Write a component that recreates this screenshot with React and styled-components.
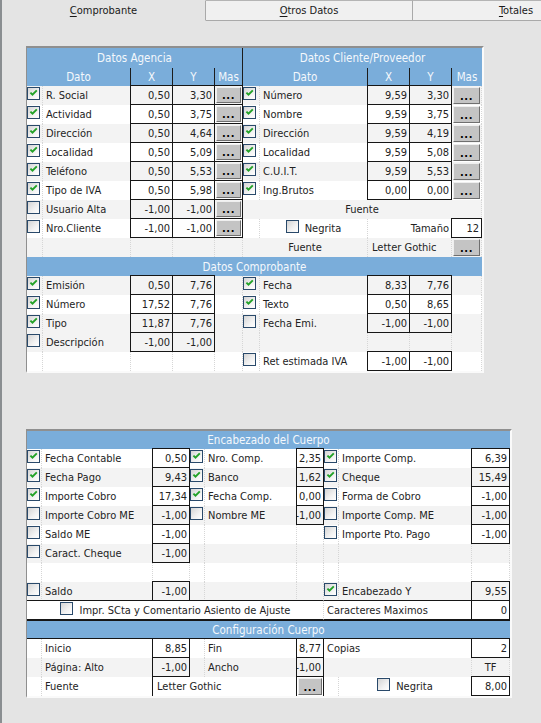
import React from "react";
import styled, { createGlobalStyle, css } from "styled-components";

const GlobalStyle = createGlobalStyle`
  html, body {
    margin: 0;
    padding: 0;
    background: #e4e4e4;
  }
  body {
    font-family: "DejaVu Sans Condensed", "DejaVu Sans", sans-serif;
    font-stretch: condensed;
    font-size: 11px;
    color: #232323;
  }
`;

const WHITE = "#ffffff";
const GREY = "#f3f3f3";

const TOP_COLS = "16px 88px 42px 42px 28px 17px 108px 42px 42px 30px";
const TOP_ROWS = "20px 18px repeat(15, 19px)";
const BOT_COLS = "15px 111px 37px 15px 92px 27px 15px 133px 38px";
const BOT_ROWS = "18px repeat(13, 19px)";

const Window = styled.div`
  width: 541px;
  height: 723px;
  box-sizing: border-box;
  border-left: 2px solid #8a8e91;
  background: #e4e4e4;
  overflow: hidden;
`;

const TabStrip = styled.div`
  display: flex;
  height: 21px;
`;

const Tab = styled.div`
  flex: 0 0 ${(p) => p.$width}px;
  box-sizing: border-box;
  display: flex;
  align-items: center;
  justify-content: center;
  color: #1a1a1a;
  background: ${(p) => (p.$active ? "#e4e4e4" : "#f0f0f0")};
  border-right: 1px solid #a9a9a9;
  border-top: 1px solid ${(p) => (p.$active ? "#e4e4e4" : "#b4b4b4")};
  border-bottom: 1px solid ${(p) => (p.$active ? "#e4e4e4" : "#a9a9a9")};

  u {
    text-decoration-thickness: 1px;
    text-underline-offset: 2px;
  }
`;

const Panel = styled.div`
  display: flex;
  flex-direction: column;
  align-items: flex-start;
  gap: 56px;
  padding: 25px 0 0 24px;
`;

const Frame = styled.div`
  border-style: solid;
  border-width: 2px 2px 2px 1px;
  border-color: #8f8f8f #fafafa #fafafa #8f8f8f;
  background: #ffffff;
`;

const Sheet = styled.div`
  display: grid;
  grid-template-columns: ${(p) => p.$cols};
  grid-template-rows: ${(p) => p.$rows};
`;

const Cell = styled.div`
  grid-column: span ${(p) => p.$span || 1};
  min-width: 0;
  box-sizing: border-box;
  display: flex;
  align-items: center;
  justify-content: ${(p) =>
    ({ right: "flex-end", center: "center" }[p.$align] || "flex-start")};
  gap: ${(p) => p.$gap || 0}px;
  padding: 0 ${(p) => (p.$align === "right" ? 2 : 0)}px 0 ${(p) => p.$pl || 0}px;
  background: ${(p) => p.$bg || WHITE};
  white-space: nowrap;
  overflow: hidden;
  border-right: 1px dotted #d6d6d6;

  ${(p) =>
    p.$box &&
    css`
      border: 1px solid #161616;
      margin: -1px 0 0 -1px;
    `}
  ${(p) =>
    p.$sides &&
    css`
      border-left: 1px solid #161616;
      border-right: 1px solid #161616;
      margin-left: -1px;
    `}
  ${(p) =>
    p.$rule &&
    css`
      border-top: 1px solid #161616;
      border-bottom: 1px solid #161616;
      margin-top: -1px;
    `}
`;

const Head = styled.div`
  grid-column: span ${(p) => p.$span || 1};
  box-sizing: border-box;
  display: flex;
  align-items: center;
  justify-content: center;
  background: #7aadda;
  color: #f4f8fc;
  font-size: 11.5px;
  white-space: nowrap;
  overflow: hidden;
  border-right: ${(p) => (p.$sep ? "1px solid #1c1c1c" : "none")};
  ${(p) =>
    p.$rule &&
    css`
      box-shadow: inset 0 -1px 0 #161616, inset 0 1px 0 #161616;
    `}
`;

const CheckBox = styled.span`
  flex: none;
  align-self: flex-start;
  width: 13px;
  height: 13px;
  margin-top: 1px;
  box-sizing: border-box;
  border: 1px solid #29496a;
  background: linear-gradient(135deg, #d4d4d4 0%, #f2f2f2 60%, #ffffff 100%);
  display: flex;
`;

const DotsButton = styled.div`
  flex: 1;
  align-self: stretch;
  margin: 1px;
  box-sizing: border-box;
  background: #c4c4c4;
  border: 1px solid;
  border-color: #efefef #6f6f6f #6f6f6f #efefef;
  display: flex;
  align-items: flex-end;
  justify-content: center;
  padding-bottom: 1px;
  color: #000;
  font-weight: bold;
  font-size: 11px;
  line-height: 11px;
  letter-spacing: 0.5px;
`;

const Check = ({ on }) => (
  <CheckBox>
    {on && (
      <svg width="11" height="11" viewBox="0 0 11 11">
        <path
          d="M2.4 4.6 L4.5 6.7 L8.8 2.3"
          fill="none"
          stroke="#22a227"
          strokeWidth="1.9"
        />
      </svg>
    )}
  </CheckBox>
);

const Dots = () => <DotsButton>...</DotsButton>;

const agencia = [
  ["R. Social", "0,50", "3,30", true],
  ["Actividad", "0,50", "3,75", true],
  ["Dirección", "0,50", "4,64", true],
  ["Localidad", "0,50", "5,09", true],
  ["Teléfono", "0,50", "5,53", true],
  ["Tipo de IVA", "0,50", "5,98", true],
  ["Usuario Alta", "-1,00", "-1,00", false],
  ["Nro.Cliente", "-1,00", "-1,00", false],
  null,
];

const cliente = [
  ["Número", "9,59", "3,30", true],
  ["Nombre", "9,59", "3,75", true],
  ["Dirección", "9,59", "4,19", true],
  ["Localidad", "9,59", "5,08", true],
  ["C.U.I.T.", "9,59", "5,53", true],
  ["Ing.Brutos", "0,00", "0,00", true],
];

const topStripes = [GREY, WHITE, GREY, WHITE, GREY, WHITE, GREY, WHITE, GREY];

const comprobante = [
  {
    bg: GREY,
    left: ["Emisión", "0,50", "7,76", true],
    right: ["Fecha", "8,33", "7,76", true],
  },
  {
    bg: WHITE,
    left: ["Número", "17,52", "7,76", true],
    right: ["Texto", "0,50", "8,65", true],
  },
  {
    bg: GREY,
    left: ["Tipo", "11,87", "7,76", true],
    right: ["Fecha Emi.", "-1,00", "-1,00", false],
  },
  { bg: GREY, left: ["Descripción", "-1,00", "-1,00", false], right: null },
  {
    bg: WHITE,
    left: null,
    right: ["Ret estimada IVA", "-1,00", "-1,00", false],
  },
];

const cuerpo = [
  {
    bg: WHITE,
    g: [
      ["Fecha Contable", "0,50", true],
      ["Nro. Comp.", "2,35", true],
      ["Importe Comp.", "6,39", true],
    ],
  },
  {
    bg: GREY,
    g: [
      ["Fecha Pago", "9,43", true],
      ["Banco", "1,62", true],
      ["Cheque", "15,49", true],
    ],
  },
  {
    bg: WHITE,
    g: [
      ["Importe Cobro", "17,34", true],
      ["Fecha Comp.", "0,00", true],
      ["Forma de Cobro", "-1,00", false],
    ],
  },
  {
    bg: GREY,
    g: [
      ["Importe Cobro ME", "-1,00", false],
      ["Nombre ME", "-1,00", false],
      ["Importe Comp. ME", "-1,00", false],
    ],
  },
  {
    bg: WHITE,
    g: [["Saldo ME", "-1,00", false], null, ["Importe Pto. Pago", "-1,00", false]],
  },
  { bg: GREY, g: [["Caract. Cheque", "-1,00", false], null, null] },
  { bg: WHITE, g: [null, null, null] },
  { bg: GREY, g: [["Saldo", "-1,00", false], null, ["Encabezado Y", "9,55", true]] },
];

const Part = ({ item, bg, button, boxMas }) => {
  if (!item) {
    return (
      <>
        <Cell $bg={bg} />
        <Cell $bg={bg} />
        <Cell $bg={bg} />
        <Cell $bg={bg} />
        <Cell $bg={bg} />
      </>
    );
  }
  const [label, x, y, on] = item;
  return (
    <>
      <Cell $bg={bg}>
        <Check on={on} />
      </Cell>
      <Cell $bg={bg} $pl={3}>
        {label}
      </Cell>
      <Cell $bg={bg} $box $align="right">
        {x}
      </Cell>
      <Cell $bg={bg} $box $align="right">
        {y}
      </Cell>
      {button ? (
        <Cell $bg={bg} $box={boxMas}>
          <Dots />
        </Cell>
      ) : (
        <Cell $bg={bg} />
      )}
    </>
  );
};

const Group = ({ item, bg }) => {
  if (!item) {
    return (
      <>
        <Cell $bg={bg} />
        <Cell $bg={bg} />
        <Cell $bg={bg} />
      </>
    );
  }
  const [label, value, on] = item;
  return (
    <>
      <Cell $bg={bg}>
        <Check on={on} />
      </Cell>
      <Cell $bg={bg} $pl={3}>
        {label}
      </Cell>
      <Cell $bg={bg} $box $align="right">
        {value}
      </Cell>
    </>
  );
};

const ClienteExtra = ({ index }) => {
  if (index === 6) {
    return (
      <Cell $span={5} $align="center" $bg={GREY}>
        Fuente
      </Cell>
    );
  }
  if (index === 7) {
    return (
      <>
        <Cell $bg={WHITE} />
        <Cell $bg={WHITE} $align="center" $gap={6}>
          <Check />
          Negrita
        </Cell>
        <Cell $span={2} $bg={WHITE} $align="right">
          Tamaño
        </Cell>
        <Cell $bg={WHITE} $box $align="right">
          12
        </Cell>
      </>
    );
  }
  return (
    <>
      <Cell $span={2} $bg={GREY} $align="center">
        Fuente
      </Cell>
      <Cell $span={2} $bg={GREY} $pl={4}>
        Letter Gothic
      </Cell>
      <Cell $bg={GREY}>
        <Dots />
      </Cell>
    </>
  );
};

const TopSheet = () => (
  <Sheet $cols={TOP_COLS} $rows={TOP_ROWS}>
    <Head $span={5} $sep>
      Datos Agencia
    </Head>
    <Head $span={5}>Datos Cliente/Proveedor</Head>

    <Head $span={2} $sep>
      Dato
    </Head>
    <Head $sep>X</Head>
    <Head $sep>Y</Head>
    <Head $sep>Mas</Head>
    <Head $span={2} $sep>
      Dato
    </Head>
    <Head $sep>X</Head>
    <Head $sep>Y</Head>
    <Head>Mas</Head>

    {agencia.map((item, i) => (
      <React.Fragment key={i}>
        <Part item={item} bg={topStripes[i]} button={!!item} boxMas />
        {i < 6 ? (
          <Part item={cliente[i]} bg={topStripes[i]} button />
        ) : (
          <ClienteExtra index={i} />
        )}
      </React.Fragment>
    ))}

    <Head $span={10}>Datos Comprobante</Head>

    {comprobante.map((row, i) => (
      <React.Fragment key={i}>
        <Part item={row.left} bg={row.bg} />
        <Part item={row.right} bg={row.bg} />
      </React.Fragment>
    ))}
  </Sheet>
);

const BottomSheet = () => (
  <Sheet $cols={BOT_COLS} $rows={BOT_ROWS}>
    <Head $span={9}>Encabezado del Cuerpo</Head>

    {cuerpo.map((row, i) => (
      <React.Fragment key={i}>
        {row.g.map((item, j) => (
          <Group key={j} item={item} bg={row.bg} />
        ))}
      </React.Fragment>
    ))}

    <Cell $span={6} $bg={WHITE} $align="center" $gap={7} $rule>
      <Check />
      Impr. SCta y Comentario Asiento de Ajuste
    </Cell>
    <Cell $span={2} $bg={WHITE} $pl={3} $rule>
      Caracteres Maximos
    </Cell>
    <Cell $bg={WHITE} $box $align="right">
      0
    </Cell>

    <Head $span={9} $rule>
      Configuración Cuerpo
    </Head>

    <Cell $bg={WHITE} />
    <Cell $bg={WHITE} $pl={3}>
      Inicio
    </Cell>
    <Cell $bg={WHITE} $box $align="right">
      8,85
    </Cell>
    <Cell $bg={WHITE} />
    <Cell $bg={WHITE} $pl={3}>
      Fin
    </Cell>
    <Cell $bg={WHITE} $box $align="right">
      8,77
    </Cell>
    <Cell $span={2} $bg={WHITE} $pl={3}>
      Copias
    </Cell>
    <Cell $bg={WHITE} $box $align="right">
      2
    </Cell>

    <Cell $bg={GREY} />
    <Cell $bg={GREY} $pl={3}>
      Página: Alto
    </Cell>
    <Cell $bg={GREY} $box $align="right">
      -1,00
    </Cell>
    <Cell $bg={GREY} />
    <Cell $bg={GREY} $pl={3}>
      Ancho
    </Cell>
    <Cell $bg={GREY} $box $align="right">
      -1,00
    </Cell>
    <Cell $span={2} $bg={GREY} />
    <Cell $bg={GREY} $align="center">
      TF
    </Cell>

    <Cell $bg={WHITE} />
    <Cell $bg={WHITE} $pl={3}>
      Fuente
    </Cell>
    <Cell $span={3} $bg={WHITE} $pl={4} $sides>
      Letter Gothic
    </Cell>
    <Cell $bg={WHITE} $sides>
      <Dots />
    </Cell>
    <Cell $bg={WHITE} />
    <Cell $bg={WHITE} $align="center" $gap={6}>
      <Check />
      Negrita
    </Cell>
    <Cell $bg={WHITE} $box $align="right">
      8,00
    </Cell>
  </Sheet>
);

export default function App() {
  return (
    <>
      <GlobalStyle />
      <Window>
        <TabStrip>
          <Tab $width={204} $active>
            <span>
              <u>C</u>omprobante
            </span>
          </Tab>
          <Tab $width={207}>
            <span>
              <u>O</u>tros Datos
            </span>
          </Tab>
          <Tab $width={207}>
            <span>
              <u>T</u>otales
            </span>
          </Tab>
        </TabStrip>
        <Panel>
          <Frame>
            <TopSheet />
          </Frame>
          <Frame>
            <BottomSheet />
          </Frame>
        </Panel>
      </Window>
    </>
  );
}
